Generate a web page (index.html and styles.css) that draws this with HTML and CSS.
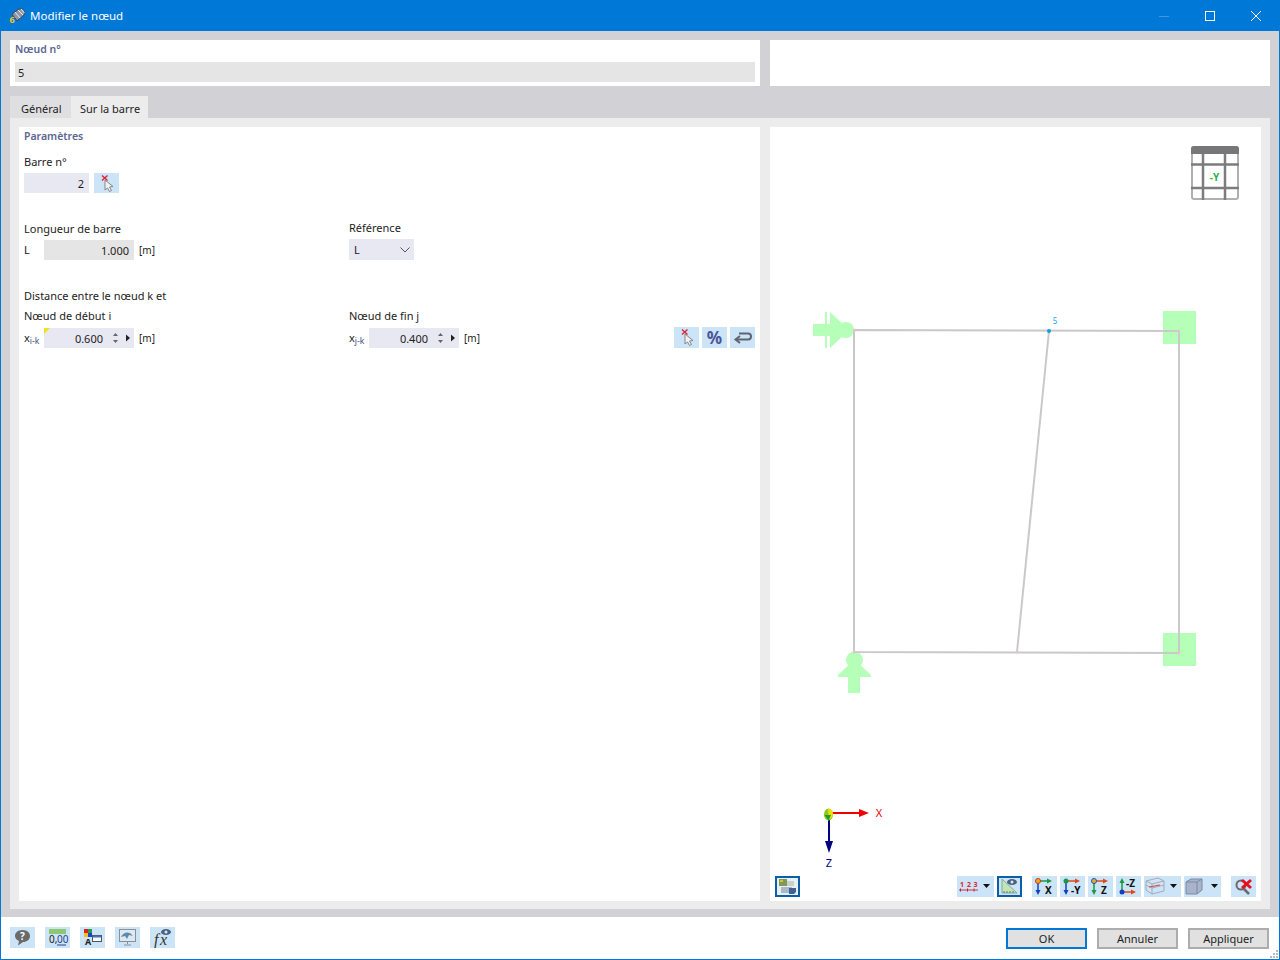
FILE: index.html
```html
<!DOCTYPE html>
<html lang="fr">
<head>
	<meta charset="utf-8">
	<title>Modifier le nœud</title>
	<link rel="stylesheet" href="styles.css">
</head>
<body>
<div class="window">
	<div class="titlebar">
		<svg class="appicon" width="17" height="18" viewBox="0 0 17 18">
			<path d="M3 7 L10 2 Q14 1 15.500 4 Q16.500 7 14 9 L8 14 Z" fill="#8c97a8" stroke="#3c4654"/>
			<path d="M6 5 L11 11 M9 3 L14 8 M12 2 L15.500 6" stroke="#e8edf3"/>
			<text x="0.500" y="15.500" class="appicon-six">6</text>
		</svg>
		<span class="titletext">Modifier le nœud</span>
		<div class="winbtns">
			<svg width="46" height="30" viewBox="0 0 46 30"><path d="M18 15.500 H28" stroke="#3f95e0"/></svg>
			<svg width="46" height="30" viewBox="0 0 46 30"><rect x="18.500" y="10.500" width="9" height="9" fill="none" stroke="#fff"/></svg>
			<svg width="46" height="30" viewBox="0 0 46 30"><path d="M18 10 L28 20 M28 10 L18 20" stroke="#fff" fill="none"/></svg>
		</div>
	</div>

	<div class="content">
		<div class="top">
			<div class="top-left">
				<div class="heading">Nœud n°</div>
				<div class="nodefield">5</div>
			</div>
			<div class="top-right"></div>
		</div>

		<div class="tabs">
			<div class="tab">Général</div>
			<div class="tab active">Sur la barre</div>
		</div>

		<div class="tabpanel">
			<div class="params">
				<div class="heading">Paramètres</div>

				<div class="label barre-label">Barre n°</div>
				<div class="row">
					<div class="field lav w65">2</div>
					<div class="iconbtn">
						<svg width="25" height="20" viewBox="0 0 25 20">
							<path d="M11 7 L11 17 L13.500 15 L15.500 18.500 L17.500 17.500 L15.500 14 L19 13.500 Z" fill="#f2f2f2" stroke="#85868a"/>
							<path d="M8 2.500 L13.500 7.500 M13.500 2.500 L8 7.500" stroke="#e0202c" stroke-width="1.300"/>
						</svg>
					</div>
				</div>

				<div class="cols block">
					<div>
						<div class="label fieldgap">Longueur de barre</div>
						<div class="row">
							<span class="sym">L</span>
							<div class="field grey w90">1.000</div>
							<span class="unit">[m]</span>
						</div>
					</div>
					<div class="ref">
						<div class="label fieldgap">Référence</div>
						<div class="select">L
							<svg width="10" height="6" viewBox="0 0 10 6"><path d="M0.500 0.500 L5 5 L9.500 0.500" fill="none" stroke="#555"/></svg>
						</div>
					</div>
				</div>

				<div class="label block">Distance entre le nœud k et</div>
				<div class="cols dist">
					<div>
						<div class="label fieldgap2">Nœud de début i</div>
						<div class="row">
							<span class="sym">x<sub>i-k</sub></span>
							<div class="field lav w90 spin flagged">0.600
								<svg width="22" height="20" viewBox="0 0 22 20">
									<path d="M1 8 L3.500 5 L6 8 Z M1 12 L3.500 15 L6 12 Z" fill="#666"/>
									<path d="M14 6.500 L18 10 L14 13.500 Z" fill="#222"/>
								</svg>
							</div>
							<span class="unit">[m]</span>
						</div>
					</div>
					<div>
						<div class="label fieldgap2">Nœud de fin j</div>
						<div class="row">
							<span class="sym">x<sub>j-k</sub></span>
							<div class="field lav w90 spin">0.400
								<svg width="22" height="20" viewBox="0 0 22 20">
									<path d="M1 8 L3.500 5 L6 8 Z M1 12 L3.500 15 L6 12 Z" fill="#666"/>
									<path d="M14 6.500 L18 10 L14 13.500 Z" fill="#222"/>
								</svg>
							</div>
							<span class="unit">[m]</span>
							<div class="rowbtns">
								<div class="iconbtn tall">
									<svg width="25" height="21" viewBox="0 0 25 21">
										<path d="M11 7 L11 17 L13.500 15 L15.500 18.500 L17.500 17.500 L15.500 14 L19 13.500 Z" fill="#f2f2f2" stroke="#85868a"/>
										<path d="M8 2.500 L13.500 7.500 M13.500 2.500 L8 7.500" stroke="#e0202c" stroke-width="1.300"/>
									</svg>
								</div>
								<div class="iconbtn tall percent">%</div>
								<div class="iconbtn tall">
									<svg width="25" height="21" viewBox="0 0 25 21">
										<path d="M9 6.500 H18 Q21 6.500 21 9.500 Q21 12.500 18 12.500 H7" fill="none" stroke="#5f6470" stroke-width="2"/>
										<path d="M10 9 L5.500 12.500 L10 16" fill="none" stroke="#5f6470" stroke-width="2"/>
									</svg>
								</div>
							</div>
						</div>
					</div>
				</div>
			</div>

			<div class="viewpanel">
				<svg class="canvas" width="491" height="749" viewBox="770 127 491 749">
					<!-- view cube -->
					<rect x="1192" y="147" width="46" height="52" rx="2" fill="none" stroke="#b0b0b0" stroke-width="2"/>
					<g fill="none" stroke="#7c7c7c" stroke-width="2.500">
						<path d="M1203 150 V200 M1225 150 V200 M1191 164.500 H1239 M1191 188 H1239"/>
					</g>
					<path d="M1191 149 Q1191 146 1194 146 H1236 Q1239 146 1239 149 V154 H1191 Z" fill="#77777a"/>
					<text x="1214.500" y="181" class="cube-y">-Y</text>

					<!-- supports -->
					<g fill="#b6ffb9">
						<rect x="1163" y="311" width="33" height="33"/>
						<rect x="1163" y="633" width="33" height="33"/>
						<rect x="813" y="324" width="32" height="12"/>
						<rect x="825" y="312" width="2" height="36"/>
						<path d="M830 312 L844 325 V335 L830 348 Z"/>
						<circle cx="846" cy="330" r="8"/>
						<circle cx="854.500" cy="660" r="8.500"/>
						<path d="M838 675 L852 662 H857 L871 675 V677 H860 V693 H848 V677 H838 Z"/>
					</g>

					<!-- members -->
					<g stroke="#c9c9c9" stroke-width="2" fill="none">
						<path d="M854 330 L1179 331 V653 L854 652 Z"/>
						<path d="M1049 331 L1017 652"/>
					</g>
					<g fill="#e4c4c8">
						<circle cx="855" cy="330" r="1.500"/>
						<circle cx="1179" cy="331" r="1.500"/>
						<circle cx="854" cy="652" r="1.500"/>
						<circle cx="1179" cy="653" r="1.500"/>
						<circle cx="1017" cy="652" r="1.500"/>
					</g>
					<circle cx="1049" cy="331" r="2" fill="#0f9fe6"/>
					<text x="1055" y="324" class="node-num">5</text>

					<!-- axes -->
					<path d="M829 813 H860" stroke="#f00000" stroke-width="2"/>
					<path d="M859 809 L869 813 L859 817 Z" fill="#f00000"/>
					<path d="M829 815 V843" stroke="#000080" stroke-width="2"/>
					<path d="M825 841 L829 853 L833 841 Z" fill="#000080"/>
					<ellipse cx="828.500" cy="814.500" rx="4.500" ry="6" fill="#8cc820"/>
					<path d="M828 809 Q833 809 833 814 Q833 818 829 819 Z" fill="#f0e000"/>
					<path d="M824.500 815 L828.500 820.500 L831 815 Z" fill="#10a030"/>
					<text x="879" y="817" class="axis-x">X</text>
					<text x="829" y="867" class="axis-z">Z</text>
				</svg>

				<div class="viewbar">
					<div class="iconbtn on">
						<svg width="21" height="17" viewBox="0 0 21 17">
							<rect x="0" y="0" width="21" height="17" fill="#e8f0f4"/>
							<rect x="2" y="1" width="8" height="7" fill="#7d9a5a"/>
							<rect x="3" y="2" width="3" height="2" fill="#d8c030"/>
							<rect x="10" y="3" width="7" height="5" fill="#c8d0c8"/>
							<rect x="4" y="9" width="11" height="6" fill="#aab8cc"/>
							<path d="M12 10 H19 V14 L17 16 H12 Z" fill="#44608c"/>
						</svg>
					</div>
					<div class="spring"></div>
					<div class="iconbtn drop">
						<svg width="37" height="21" viewBox="0 0 37 21">
							<text x="3" y="11" class="ruler-num">1</text>
							<text x="10" y="11" class="ruler-num">2</text>
							<text x="16.500" y="11" class="ruler-num">3</text>
							<path d="M2 14 H21" stroke="#c83848"/>
							<path d="M3.500 12.500 V15.500 M10.500 12.500 V15.500 M17 12.500 V15.500" stroke="#c02030"/>
							<path d="M26 8 H33 L29.500 12 Z" fill="#111"/>
						</svg>
					</div>
					<div class="iconbtn on gap3">
						<svg width="21" height="17" viewBox="0 0 21 17">
							<path d="M3 1 L18 15 H3 Z" fill="#bfe6b8" stroke="#8aa898"/>
							<path d="M5 15 V13 M8 15 V13 M11 15 V13 M14 15 V13" stroke="#777"/>
							<ellipse cx="13" cy="4" rx="5" ry="3" fill="#4a6080"/>
							<circle cx="13" cy="4" r="1.500" fill="#dfe8f0"/>
						</svg>
					</div>
					<div class="iconbtn gap10">
						<svg width="25" height="21" viewBox="0 0 25 21">
							<path d="M6 5 H17" stroke="#189a40" stroke-width="1.500"/><path d="M15 2.500 L20 5 L15 7.500 Z" fill="#189a40"/>
							<path d="M6 6 V15" stroke="#1040c0" stroke-width="1.500"/><path d="M3.500 14 L6 19 L8.500 14 Z" fill="#1040c0"/>
							<circle cx="6" cy="5" r="2.500" fill="#e8b020" stroke="#d03020"/>
							<text x="13" y="18" class="axis-btn">X</text>
						</svg>
					</div>
					<div class="iconbtn gap3">
						<svg width="25" height="21" viewBox="0 0 25 21">
							<path d="M6 5 H17" stroke="#e04818" stroke-width="1.500"/><path d="M15 2.500 L20 5 L15 7.500 Z" fill="#e04818"/>
							<path d="M6 6 V15" stroke="#1040c0" stroke-width="1.500"/><path d="M3.500 14 L6 19 L8.500 14 Z" fill="#1040c0"/>
							<circle cx="6" cy="5" r="2.500" fill="#189a40"/>
							<text x="11" y="18" class="axis-btn">-Y</text>
						</svg>
					</div>
					<div class="iconbtn gap3">
						<svg width="25" height="21" viewBox="0 0 25 21">
							<path d="M6 5 H17" stroke="#e04818" stroke-width="1.500"/><path d="M15 2.500 L20 5 L15 7.500 Z" fill="#e04818"/>
							<path d="M6 6 V15" stroke="#189a40" stroke-width="1.500"/><path d="M3.500 14 L6 19 L8.500 14 Z" fill="#189a40"/>
							<circle cx="6" cy="5" r="2.500" fill="#e8b020" stroke="#2050c0"/>
							<text x="13" y="18" class="axis-btn">Z</text>
						</svg>
					</div>
					<div class="iconbtn gap3">
						<svg width="25" height="21" viewBox="0 0 25 21">
							<path d="M6 16 H17" stroke="#e04818" stroke-width="1.500"/><path d="M15 13.500 L20 16 L15 18.500 Z" fill="#e04818"/>
							<path d="M6 15 V6" stroke="#189a40" stroke-width="1.500"/><path d="M3.500 7 L6 2 L8.500 7 Z" fill="#189a40"/>
							<circle cx="6" cy="16" r="2.500" fill="#1040c0"/>
							<text x="10" y="11" class="axis-btn">-Z</text>
						</svg>
					</div>
					<div class="iconbtn drop gap3">
						<svg width="37" height="21" viewBox="0 0 37 21">
							<path d="M2 5 L14 2 L20 5 V9 L8 12 L2 9 Z M2 5 L8 8 L20 5 M8 8 V12" fill="#d3e4f2" stroke="#a4aab8"/>
							<path d="M2 9 V14 L8 18 L20 15 V9 M8 12 V18" fill="none" stroke="#a4aab8"/>
							<path d="M5 11 L16 9" stroke="#d84848" stroke-width="1.200"/>
							<path d="M26 8 H33 L29.500 12 Z" fill="#111"/>
						</svg>
					</div>
					<div class="iconbtn drop gap3">
						<svg width="37" height="21" viewBox="0 0 37 21">
							<path d="M2 6 L7 3 H18 V14 L13 18 H2 Z" fill="#a8b4cc" stroke="#8088a0"/>
							<path d="M2 6 H13 V18 M13 6 L18 3" fill="none" stroke="#8088a0"/>
							<path d="M27 8 H34 L30.500 12 Z" fill="#111"/>
						</svg>
					</div>
					<div class="iconbtn gap10">
						<svg width="25" height="21" viewBox="0 0 25 21">
							<circle cx="10" cy="9" r="4.500" fill="none" stroke="#6a6a70" stroke-width="2"/>
							<path d="M13 13 L18 18" stroke="#6a6a70" stroke-width="2.500"/>
							<path d="M11 4 L20 12 M20 4 L11 12" stroke="#e8101c" stroke-width="3"/>
						</svg>
					</div>
				</div>
			</div>
		</div>
	</div>

	<div class="footer">
		<div class="iconbtn">
			<svg width="25" height="21" viewBox="0 0 25 21">
				<path d="M12.500 3 C17.500 3 20 6 20 9 C20 12.500 17 15 13 15 L8 18.500 L9 14 C6.500 13 5 11 5 9 C5 6 7.500 3 12.500 3 Z" fill="#6a6a6a"/>
				<text x="12.500" y="13" class="help-q">?</text>
			</svg>
		</div>
		<div class="iconbtn">
			<svg width="25" height="21" viewBox="0 0 25 21">
				<rect x="4" y="2" width="17" height="5" fill="#8cc870"/>
				<text x="4" y="16" class="zero-num">0,</text>
				<text x="12" y="16" class="zero-num zero-blue">00</text>
				<path d="M12 18 H21" stroke="#2a3f90"/>
			</svg>
		</div>
		<div class="iconbtn">
			<svg width="25" height="21" viewBox="0 0 25 21">
				<rect x="4" y="2" width="4" height="4" fill="#e02020"/>
				<rect x="8" y="2" width="4" height="4" fill="#20a040"/>
				<rect x="4" y="6" width="4" height="4" fill="#f0c020"/>
				<rect x="8" y="6" width="4" height="4" fill="#2040d0"/>
				<text x="8" y="18" class="font-a">A</text>
				<rect x="12.500" y="8.500" width="9" height="6" fill="#fff" stroke="#555"/>
				<path d="M13 9.500 H21" stroke="#4070c0" stroke-width="2"/>
			</svg>
		</div>
		<div class="iconbtn">
			<svg width="25" height="21" viewBox="0 0 25 21">
				<rect x="4.500" y="2.500" width="16" height="12" fill="#dfe8f0" stroke="#8a9098"/>
				<path d="M6 10 Q9 4 15 6 L18 9 L14 8 L12 12 L10 9 Z" fill="#5a8ab0"/>
				<path d="M12.500 15 V17 M9 18 H16" stroke="#8a9098"/>
			</svg>
		</div>
		<div class="iconbtn">
			<svg width="25" height="21" viewBox="0 0 25 21">
				<text x="4" y="18" class="fx">f</text>
				<text x="10" y="18" class="fx">x</text>
				<ellipse cx="16" cy="5" rx="5" ry="3" fill="#4a6080"/>
				<circle cx="16" cy="5" r="1.500" fill="#dfe8f0"/>
			</svg>
		</div>
		<div class="spring"></div>
		<div class="btn default">OK</div>
		<div class="btn">Annuler</div>
		<div class="btn">Appliquer</div>
		<svg class="grip" width="10" height="10" viewBox="0 0 10 10">
			<path d="M7 1 H9 V3 H7 Z M4 4 H6 V6 H4 Z M7 4 H9 V6 H7 Z M1 7 H3 V9 H1 Z M4 7 H6 V9 H4 Z M7 7 H9 V9 H7 Z" fill="#b8b8b8"/>
		</svg>
	</div>
</div>
</body>
</html>
```

FILE: styles.css
```css
* {
	box-sizing: border-box;
}
html, body {
	margin: 0px;
	height: 100%;
}
body {
	font-family: "Noto Sans", "Open Sans", sans-serif;
	font-size: 11px;
	line-height: 14px;
	color: #1c1c1c;
}
.window {
	height: 960px;
	border: solid 1px #0078d7;
	display: flex;
	flex-direction: column;
	position: relative;
}
.titlebar {
	height: 30px;
	flex: none;
	background: #0078d7;
	display: flex;
	align-items: center;
	padding-left: 8px;
	color: #ffffff;
}
.appicon {
	flex: none;
}
.appicon-six {
	font-size: 9px;
	font-weight: bold;
	fill: #f5c518;
}
.titletext {
	margin-left: 4px;
	font-size: 11.5px;
}
.winbtns {
	margin-left: auto;
	margin-right: 0px;
	display: flex;
}
.winbtns svg {
	display: block;
}
.content {
	flex: 1;
	background: #d1d1d6;
	padding: 9px 9px 8px 9px;
	display: flex;
	flex-direction: column;
	min-height: 0;
}
.top {
	height: 46px;
	flex: none;
	display: flex;
	gap: 10px;
}
.top-left {
	width: 750px;
	background: #ffffff;
	padding: 2px 5px 0px 5px;
}
.top-right {
	flex: 1;
	background: #ffffff;
}
.heading {
	color: #5c6690;
	font-size: 10.5px;
	font-weight: 600;
	height: 14px;
}
.nodefield {
	margin-top: 6px;
	height: 20px;
	line-height: 21px;
	background: #e5e5e5;
	padding-left: 3px;
}
.tabs {
	margin-top: 10px;
	height: 22px;
	flex: none;
	display: flex;
}
.tab {
	background: #dfdfe1;
	line-height: 25px;
	padding-left: 11px;
	width: 61px;
	white-space: nowrap;
}
.tab.active {
	background: #ececec;
	width: 77px;
	padding-left: 9px;
}
.tabpanel {
	flex: 1;
	background: #ececec;
	padding: 9px 9px 8px 9px;
	display: flex;
	gap: 10px;
	min-height: 0;
}
.params {
	width: 741px;
	background: #ffffff;
	padding: 2px 5px 0px 5px;
}
.label {
	height: 14px;
}
.barre-label {
	margin-top: 12px;
	margin-bottom: 4px;
}
.block {
	margin-top: 29px;
}
.fieldgap {
	margin-bottom: 4px;
}
.fieldgap2 {
	margin-bottom: 5px;
}
.cols {
	display: grid;
	grid-template-columns: 325px 1fr;
}
.dist {
	margin-top: 6px;
}
.ref {
	margin-top: -1px;
}
.row {
	display: flex;
	align-items: center;
	height: 20px;
}
.field {
	height: 20px;
	line-height: 21px;
	text-align: right;
	padding-right: 5px;
	flex: none;
	position: relative;
}
.lav {
	background: #e8e8f2;
}
.grey {
	background: #e5e5e5;
}
.w65 {
	width: 65px;
	padding-right: 5px;
}
.w90 {
	width: 90px;
}
.field.spin {
	padding-right: 31px;
}
.spin svg {
	position: absolute;
	right: 0px;
	top: 0px;
}
.flagged::before {
	content: "";
	position: absolute;
	left: 0px;
	top: 0px;
	border-top: solid 6px #f0e020;
	border-right: solid 6px transparent;
}
.sym {
	width: 20px;
	flex: none;
}
.sym sub {
	font-size: 8.5px;
	color: #3f4f85;
	vertical-align: -2px;
	line-height: 0;
}
.unit {
	margin-left: 5px;
	font-size: 10px;
}
.select {
	width: 65px;
	height: 21px;
	line-height: 21px;
	background: #e8e8f2;
	padding-left: 5px;
	display: flex;
	align-items: center;
	justify-content: space-between;
	padding-right: 4px;
}
.iconbtn {
	width: 25px;
	height: 20px;
	background: #cce4f7;
	flex: none;
}
.iconbtn svg {
	display: block;
}
.row > .iconbtn {
	margin-left: 5px;
}
.tall {
	height: 21px;
}
.rowbtns {
	margin-left: auto;
	display: flex;
	gap: 3px;
	margin-top: -1px;
}
.percent {
	color: #4a5496;
	font-size: 17px;
	font-weight: bold;
	line-height: 22px;
	text-align: center;
}
.viewpanel {
	flex: 1;
	background: #ffffff;
	display: flex;
	flex-direction: column;
	min-width: 0;
}
.canvas {
	display: block;
	flex: none;
}
.cube-y {
	font-size: 10px;
	font-weight: bold;
	fill: #30b050;
	text-anchor: middle;
}
.node-num {
	font-size: 8px;
	fill: #12a5e8;
	text-anchor: middle;
}
.axis-x {
	font-size: 11px;
	fill: #f00000;
	text-anchor: middle;
}
.axis-z {
	font-size: 11px;
	fill: #000080;
	text-anchor: middle;
}
.viewbar {
	height: 21px;
	flex: none;
	display: flex;
	padding: 0px 5px;
}
.viewbar .iconbtn {
	height: 21px;
}
.iconbtn.on {
	border: solid 2px #0b5ea8;
}
.drop {
	width: 37px;
}
.gap3 {
	margin-left: 3px;
}
.gap10 {
	margin-left: 10px;
}
.spring {
	flex: 1;
}
.ruler-num {
	font-size: 7px;
	font-weight: bold;
	fill: #e02030;
}
.axis-btn {
	font-size: 10px;
	font-weight: bold;
	fill: #111111;
}
.footer {
	height: 42px;
	flex: none;
	background: #ffffff;
	display: flex;
	align-items: flex-start;
	padding: 10px 10px 0px 9px;
	gap: 10px;
	position: relative;
}
.footer .iconbtn {
	height: 21px;
}
.footer .spring {
	margin-right: 20px;
}
.help-q {
	font-size: 10px;
	font-weight: bold;
	fill: #ffffff;
	text-anchor: middle;
}
.zero-num {
	font-size: 10px;
	fill: #222222;
}
.zero-blue {
	fill: #2a3f90;
}
.font-a {
	font-size: 9px;
	font-weight: bold;
	fill: #222222;
	text-anchor: middle;
}
.fx {
	font-family: "Liberation Serif", serif;
	font-style: italic;
	font-size: 16px;
	fill: #333333;
}
.btn {
	width: 81px;
	height: 21px;
	margin-top: 1px;
	background: #e1e1e1;
	border: solid 1px #adadad;
	text-align: center;
	line-height: 20px;
	outline: solid 1px #adadad;
	outline-offset: -2px;
}
.btn.default {
	border: solid 2px #0078d7;
	outline: none;
	line-height: 18px;
}
.grip {
	position: absolute;
	right: 0px;
	bottom: 0px;
}
```
